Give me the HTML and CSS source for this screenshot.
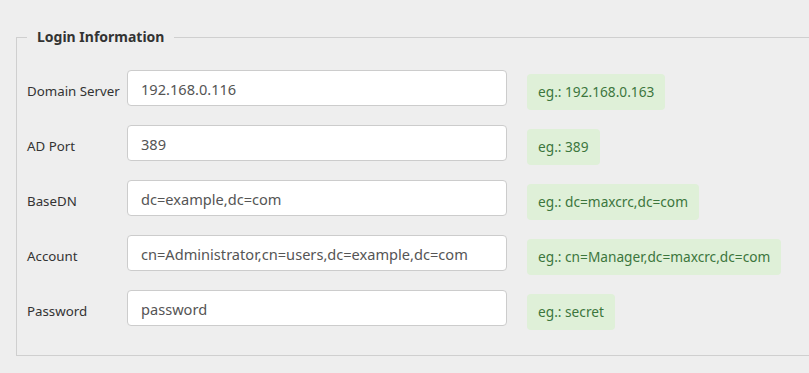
FILE: index.html
```html
<!DOCTYPE html>
<html>
<head>
<meta charset="utf-8">
<link rel="stylesheet" href="styles.css">
</head>
<body>
<fieldset class="panel">
  <legend class="panel-title">Login Information</legend>
  <div class="rows">
    <div class="row">
      <label class="label">Domain Server</label>
      <input class="field" type="text" value="192.168.0.116">
      <span class="hint">eg.: 192.168.0.163</span>
    </div>
    <div class="row">
      <label class="label">AD Port</label>
      <input class="field" type="text" value="389">
      <span class="hint">eg.: 389</span>
    </div>
    <div class="row">
      <label class="label">BaseDN</label>
      <input class="field" type="text" value="dc=example,dc=com">
      <span class="hint">eg.: dc=maxcrc,dc=com</span>
    </div>
    <div class="row">
      <label class="label">Account</label>
      <input class="field" type="text" value="cn=Administrator,cn=users,dc=example,dc=com">
      <span class="hint">eg.: cn=Manager,dc=maxcrc,dc=com</span>
    </div>
    <div class="row">
      <label class="label">Password</label>
      <input class="field" type="text" value="password">
      <span class="hint">eg.: secret</span>
    </div>
  </div>
</fieldset>
</body>
</html>
```
FILE: styles.css
```css
html, body {
  margin: 0;
  padding: 0;
  background: #eeeeee;
  font-family: "Noto Sans", "Open Sans", sans-serif;
  color: #333;
  overflow: hidden;
}
.panel {
  margin: 27px 0 0 16px;
  width: calc(100vw - 15px);
  border: 1px solid #cfcfcf;
  padding: 23px 0 25px 10px;
  box-sizing: border-box;
}
.panel-title {
  padding: 0 10px;
  margin-left: 0;
  font-size: 14px;
  font-weight: 700;
  line-height: 20px;
  color: #333;
}
.rows {
  display: flex;
  flex-direction: column;
  gap: 15px;
}
.row {
  display: flex;
  align-items: flex-start;
}
.label {
  width: 100px;
  flex: none;
  padding-top: 3px;
  font-size: 13.3px;
  line-height: 36px;
  color: #333;
}
.field {
  width: 380px;
  height: 36px;
  box-sizing: border-box;
  border: 1px solid #cccccc;
  border-radius: 4px;
  background: #fff;
  padding: 2px 13px 0;
  font-family: "Noto Sans", "Open Sans", sans-serif;
  font-size: 14.6px;
  color: #555;
  outline: none;
  margin: 0;
}
.hint {
  margin: 4px 0 0 20px;
  height: 36px;
  line-height: 36px;
  padding: 0 11px;
  border-radius: 4px;
  background: #dff0d8;
  color: #3c763d;
  font-size: 13.7px;
  white-space: nowrap;
}
```
